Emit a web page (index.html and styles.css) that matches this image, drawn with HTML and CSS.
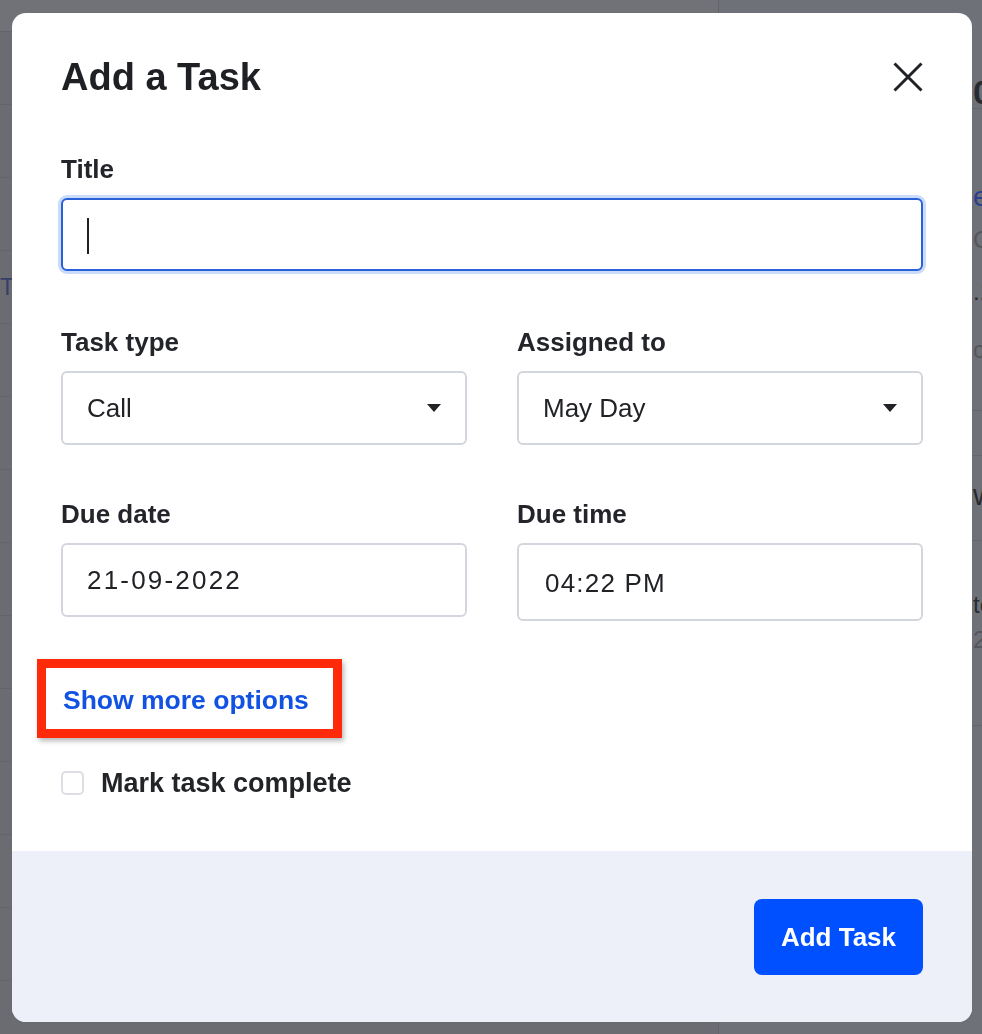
FILE: index.html
```html
<!DOCTYPE html>
<html lang="en">
<head>
<meta charset="utf-8">
<title>Add a Task</title>
<link rel="stylesheet" href="styles.css">
</head>
<body>
<div class="page">
  <div class="main">
    <div class="bg-row"></div>
    <div class="bg-row"></div>
    <div class="bg-row"></div>
    <div class="bg-row"></div>
    <div class="bg-row"><span class="bg-te">TE</span></div>
    <div class="bg-row"></div>
    <div class="bg-row"></div>
    <div class="bg-row"></div>
    <div class="bg-row"></div>
    <div class="bg-row"></div>
    <div class="bg-row"></div>
    <div class="bg-row"></div>
    <div class="bg-row"></div>
    <div class="bg-row"></div>
    <div class="bg-row"></div>
  </div>
  <div class="side">
    <div class="s-item s-num s0">0</div>
    <div class="s-sep sp1"></div>
    <div class="s-item s-link s1">e</div>
    <div class="s-item s-muted s2">Ca</div>
    <div class="s-item s3">.1</div>
    <div class="s-item s-muted s4">c:</div>
    <div class="s-sep sp2"></div>
    <div class="s-sep sp3"></div>
    <div class="s-item s-big s5">w</div>
    <div class="s-sep sp4"></div>
    <div class="s-item s6">te</div>
    <div class="s-item s-muted s7">2</div>
    <div class="s-sep sp5"></div>
  </div>
</div>

<div class="backdrop">
  <div class="modal">
    <div class="modal-body">
      <div class="modal-header">
        <h1 class="modal-title">Add a Task</h1>
        <button class="close-btn" aria-label="Close">
          <svg width="30" height="30" viewBox="0 0 30 30">
            <path d="M1.5 1.5 L28.5 28.5 M28.5 1.5 L1.5 28.5" stroke="#202226" stroke-width="3" stroke-linecap="butt" fill="none"/>
          </svg>
        </button>
      </div>

      <div class="field field-title">
        <div class="label">Title</div>
        <div class="control control-focus"><span class="caret"></span></div>
      </div>

      <div class="grid-row">
        <div class="field">
          <div class="label">Task type</div>
          <div class="control control-select">
            <span class="value">Call</span>
            <span class="arrow"></span>
          </div>
        </div>
        <div class="field">
          <div class="label">Assigned to</div>
          <div class="control control-select">
            <span class="value">May Day</span>
            <span class="arrow"></span>
          </div>
        </div>
      </div>

      <div class="grid-row">
        <div class="field">
          <div class="label">Due date</div>
          <div class="control"><span class="value value-date">21-09-2022</span></div>
        </div>
        <div class="field">
          <div class="label">Due time</div>
          <div class="control control-time"><span class="value value-time">04:22 PM</span></div>
        </div>
      </div>

      <div class="more-wrap">
        <a class="more-link" href="#">Show more options</a>
        <span class="annotation"></span>
      </div>

      <div class="check-row">
        <span class="checkbox"></span>
        <span class="check-label">Mark task complete</span>
      </div>
    </div>
    <div class="modal-footer">
      <button class="primary-btn">Add Task</button>
    </div>
  </div>
</div>
</body>
</html>
```

FILE: styles.css
```css
* { box-sizing: border-box; }

html, body {
  margin: 0;
  padding: 0;
  width: 982px;
  height: 1034px;
  overflow: hidden;
  font-family: "Liberation Sans", Arial, sans-serif;
  background: #6c6d73;
}

/* ---------- dimmed background page ---------- */
.page {
  display: flex;
  width: 982px;
  height: 1034px;
  overflow: hidden;
}

.main {
  width: 718px;
  flex-shrink: 0;
  background: #6b6c72;
  display: flex;
  flex-direction: column;
  overflow: hidden;
}

.bg-row {
  height: 73px;
  flex-shrink: 0;
  border-bottom: 1px solid #64656b;
  display: flex;
  align-items: center;
}

.bg-row:first-child { height: 32px; background: #717278; }

.bg-te {
  font-size: 24px;
  color: #2a3468;
  opacity: 0.8;
}

.side {
  flex: 1;
  min-width: 0;
  overflow: hidden;
  background: #6f7178;
  border-left: 1px solid #62636a;
  display: flex;
  flex-direction: column;
  padding-left: 254px;
  white-space: nowrap;
}

.s-item {
  height: 30px;
  line-height: 30px;
  flex-shrink: 0;
  font-size: 24px;
  color: #2a2b30;
}

.s-sep {
  height: 1px;
  flex-shrink: 0;
  background: #66676e;
  margin-left: -254px;
}

.s-num { font-size: 34px; font-weight: bold; }
.s-link { font-size: 28px; color: #2c3f8c; }
.s-muted { color: #55565c; }
.s-big { font-size: 30px; }

.s0 { margin-top: 77px; }
.sp1 { margin-top: 1px; }
.s1 { margin-top: 73px; }
.s2 { margin-top: 13px; }
.s3 { margin-top: 22px; }
.s4 { margin-top: 28px; }
.sp2 { margin-top: 45px; }
.sp3 { margin-top: 44px; }
.s5 { margin-top: 24px; }
.sp4 { margin-top: 30px; }
.s6 { margin-top: 49px; }
.s7 { margin-top: 5px; }
.sp5 { margin-top: 70px; }

/* ---------- modal ---------- */
.backdrop {
  position: fixed;
  inset: 0;
  padding: 13px 10px 12px 12px;
}

.modal {
  width: 960px;
  height: 1009px;
  background: #ffffff;
  border-radius: 14px;
  overflow: hidden;
  display: flex;
  flex-direction: column;
}

.modal-body {
  flex: 1;
  padding: 42px 49px 0 49px;
  display: flex;
  flex-direction: column;
}

.modal-header {
  display: flex;
  align-items: center;
  justify-content: space-between;
}

.modal-title {
  margin: 0;
  font-size: 38px;
  line-height: 44px;
  font-weight: bold;
  color: #1e2024;
}

.close-btn {
  width: 30px;
  height: 30px;
  padding: 0;
  border: 0;
  background: none;
  display: flex;
}

.field { display: flex; flex-direction: column; }

.field-title { margin-top: 54px; }

.label {
  font-size: 26px;
  line-height: 32px;
  font-weight: bold;
  color: #23252a;
  margin-bottom: 13px;
}

.control {
  height: 74px;
  border: 2px solid #d3d6dc;
  border-radius: 6px;
  background: #fff;
  display: flex;
  align-items: center;
  padding: 0 24px;
}

.control-focus {
  height: 73px;
  border-color: #2a60d8;
  box-shadow: 0 0 0 3px #cadcfa;
}

.control-time { height: 78px; }
.control-time .value { margin-top: 2px; }

.caret {
  width: 2px;
  height: 36px;
  background: #1f2024;
  margin-top: 2px;
}

.value {
  font-size: 26px;
  color: #202226;
}

.value-date { letter-spacing: 2.2px; }
.value-time { letter-spacing: 1.2px; margin-left: 2px; }

.control-select { justify-content: space-between; }

.arrow {
  width: 0;
  height: 0;
  border-left: 7px solid transparent;
  border-right: 7px solid transparent;
  border-top: 8px solid #202226;
}

.grid-row {
  display: grid;
  grid-template-columns: 406px 406px;
  column-gap: 50px;
  align-items: start;
  margin-top: 55px;
}

.grid-row + .grid-row { margin-top: 53px; }

.more-wrap {
  position: relative;
  align-self: flex-start;
  margin-top: 63px;
}

.more-link {
  display: block;
  font-size: 26.5px;
  line-height: 32px;
  font-weight: bold;
  color: #1252e3;
  text-decoration: none;
  margin-left: 2px;
}

.annotation {
  position: absolute;
  left: -24px;
  top: -25px;
  width: 305px;
  height: 79px;
  border: 9px solid #ff2a0a;
  box-shadow: 2px 3px 5px rgba(0, 0, 0, 0.28);
}

.check-row {
  display: flex;
  align-items: center;
  gap: 17px;
  margin-top: 51px;
}

.checkbox {
  width: 23px;
  height: 24px;
  border: 2px solid #dcdee3;
  border-radius: 5px;
  background: #fff;
}

.check-label {
  font-size: 27px;
  line-height: 32px;
  font-weight: bold;
  color: #222428;
}

.modal-footer {
  height: 171px;
  background: #edf0f8;
  display: flex;
  justify-content: flex-end;
  align-items: flex-start;
  padding: 48px 49px 0 49px;
}

.primary-btn {
  width: 169px;
  height: 76px;
  border: 0;
  border-radius: 8px;
  background: #0050ff;
  color: #ffffff;
  font-family: "Liberation Sans", Arial, sans-serif;
  font-size: 26px;
  font-weight: bold;
  padding: 0;
}
```
